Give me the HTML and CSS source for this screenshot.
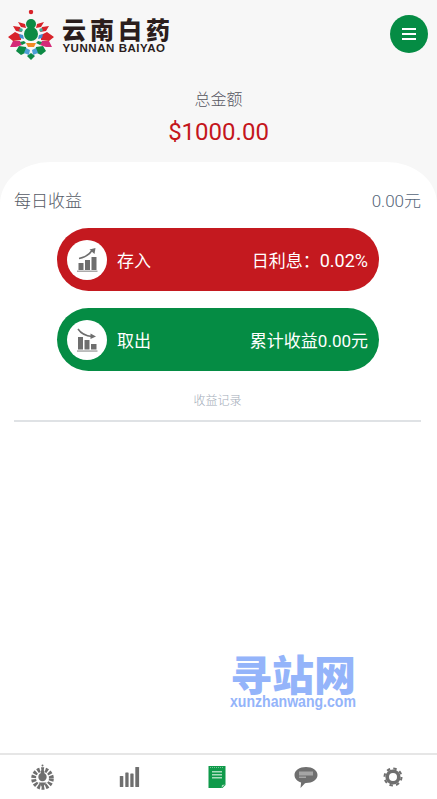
FILE: index.html
```html
<!DOCTYPE html>
<html lang="zh">
<head>
<meta charset="utf-8">
<title>云南白药</title>
<link rel="stylesheet" href="styles.css">
</head>
<body>
<div class="page">
  <header class="top">
    <div class="logo">
      <svg class="flower" viewBox="8 9 46 51" width="46" height="51">
        <circle cx="31" cy="11" r="2.2" fill="#d8232a"/>
        <path d="M18 21l7 2 1 4-5-1z M44 21l-7 2-1 4 5-1z" fill="#d8232a"/>
        <path d="M13 25l7 1 2 5-6-1z M49 25l-7 1-2 5 6-1z" fill="#d8232a"/>
        <path d="M8 36l7-5 6 3 0 5-8 1z M54 36l-7-5-6 3 0 5 8 1z" fill="#d8232a"/>
        <path d="M10 46l3-6 7 0 2 4-6 2z M52 46l-3-6-7 0-2 4 6 2z" fill="#d42a78"/>
        <path d="M16 50l3-5 7 1 1 5-6 3z M46 50l-3-5-7 1-1 5 6 3z" fill="#0d8a45"/>
        <path d="M31 59l-4-4 4-3 4 3z" fill="#0d8a45"/>
        <path d="M24 52l2-5 4 2-1 5z M38 52l-2-5-4 2 1 5z" fill="#4d9fd6"/>
        <path d="M26 42h10l-2 4h-6z" fill="#f08a24"/>
        <path d="M19 33l4 1 1 4-4-1z M43 33l-4 1-1 4 4-1z" fill="#3f8fcf"/>
        <path d="M20 41l4-1 2 2-4 2z M42 41l-4-1-2 2 4 2z" fill="#0d8a45"/>
        <circle cx="21" cy="29" r="1.800" fill="#3bb0a0"/><circle cx="41" cy="29" r="1.800" fill="#3bb0a0"/>
        <circle cx="31" cy="23" r="5" fill="#0d8a45"/>
        <circle cx="31" cy="33" r="7" fill="#0d8a45"/>
        <rect x="28" y="24" width="6" height="6" fill="#0d8a45"/>
      </svg>
      <div class="brand">
        <div class="brand-cn">云南白药</div>
        <div class="brand-en">YUNNAN BAIYAO</div>
      </div>
    </div>
    <button class="menu" aria-label="菜单"><span></span><span></span><span></span></button>
  </header>

  <section class="total">
    <div class="total-label">总金额</div>
    <div class="total-value">$1000.00</div>
  </section>

  <main class="card">
    <div class="daily">
      <span>每日收益</span>
      <span class="daily-value">0.00元</span>
    </div>

    <div class="action action-red">
      <span class="badge">
        <svg viewBox="0 0 40 40" width="40" height="40">
          <rect x="11.500" y="23" width="5" height="7" fill="#6e6e6e"/>
          <rect x="18" y="20" width="5" height="10" fill="#6e6e6e"/>
          <rect x="24.500" y="17" width="5" height="13" fill="#6e6e6e"/>
          <rect x="10" y="30.500" width="20.500" height="1.500" fill="#aaa"/>
          <path d="M12 18.500c6-1 10-3.500 13-8" fill="none" stroke="#6e6e6e" stroke-width="1.500"/>
          <path d="M22.500 9.500l6-1.500-1 6z" fill="#6e6e6e"/>
        </svg>
      </span>
      <span class="action-name">存入</span>
      <span class="action-info">日利息：<span class="rate">0.02%</span></span>
    </div>

    <div class="action action-green">
      <span class="badge">
        <svg viewBox="0 0 40 40" width="40" height="40">
          <rect x="11" y="17" width="5" height="12.500" fill="#6e6e6e"/>
          <rect x="17.500" y="20" width="5" height="9.500" fill="#6e6e6e"/>
          <rect x="24" y="24" width="5.500" height="5.500" fill="#6e6e6e"/>
          <rect x="10" y="30.300" width="20.500" height="1.500" fill="#aaa"/>
          <path d="M11 9c3 4.500 8 7 14 7.500" fill="none" stroke="#6e6e6e" stroke-width="1.500"/>
          <path d="M23.500 13.500l5.500 3-5.500 2.500z" fill="#6e6e6e"/>
        </svg>
      </span>
      <span class="action-name">取出</span>
      <span class="action-info">累计收益0.00元</span>
    </div>

    <div class="record">收益记录</div>
  </main>

  <div class="watermark">
    <div class="wm-cn">寻站网</div>
    <div class="wm-en">xunzhanwang.com</div>
  </div>

  <nav class="tabs">
    <a class="tab">
      <svg viewBox="1.500 0 26 26" width="26" height="26">
        <circle cx="13" cy="1.500" r="1" fill="#6f6f6f"/>
        <circle cx="13" cy="14.500" r="8.800" fill="none" stroke="#6f6f6f" stroke-width="5" stroke-dasharray="2.600 1.400"/>
        <circle cx="13" cy="14" r="6.200" fill="#fff"/>
        <circle cx="13" cy="8" r="2" fill="#6f6f6f"/>
        <circle cx="13" cy="13" r="4.200" fill="#6f6f6f"/>
        <path d="M9 18.500h8l-4 5z" fill="#6f6f6f"/>
      </svg>
    </a>
    <a class="tab">
      <svg viewBox="1.700 0 26 26" width="26" height="26">
        <g fill="#6f6f6f">
          <rect x="3.500" y="12" width="3.500" height="11" rx=".6"/>
          <rect x="9" y="8.500" width="3.300" height="14.500" rx=".6"/>
          <rect x="14" y="9.500" width="3.300" height="13.500" rx=".6"/>
          <rect x="19" y="3" width="3.800" height="20" rx=".6"/>
        </g>
      </svg>
    </a>
    <a class="tab">
      <svg viewBox="1 0 26 26" width="26" height="26">
        <path d="M4.500 2h17v19l-3 3h-14z" fill="#0f9a4a"/>
        <path d="M6 3.500h14" stroke="#8fd0a8" stroke-width=".8" stroke-dasharray="1 1"/>
        <path d="M8 7h10v1.500H8zM8 10h10v1.500H8zM8 13h10v1.500H8z" fill="#a8dcbc"/>
        <path d="M17.500 24l.5-3 3-.5z" fill="#a8dcbc"/>
      </svg>
    </a>
    <a class="tab">
      <svg viewBox="0 0 26 26" width="26" height="26">
        <path d="M13 3c6.500 0 11.500 3.300 11.500 8S19.500 19 13 19l-1 .2L7.500 24l.6-5.500C4 17.300 1.500 14.500 1.500 11 1.500 6.300 6.500 3 13 3z" fill="#6f6f6f"/>
        <rect x="6" y="7.500" width="14" height="4" fill="#a5a5a5"/>
        <rect x="6" y="12.500" width="7" height="1.500" fill="#a5a5a5"/>
      </svg>
    </a>
    <a class="tab">
      <svg viewBox="0 0 26 26" width="26" height="26">
        <circle cx="13" cy="13" r="5.800" fill="none" stroke="#6f6f6f" stroke-width="3.600"/>
        <circle cx="13" cy="13" r="8.500" fill="none" stroke="#6f6f6f" stroke-width="2" stroke-dasharray="3.500 3.180"/>
      </svg>
    </a>
  </nav>
</div>
</body>
</html>
```

FILE: styles.css
```css
* { box-sizing: border-box; }
html, body { margin: 0; padding: 0; height: 100%; }
body {
  font-family: Roboto, "Noto Sans CJK SC", sans-serif;
  font-weight: 300;
  background: #f7f7f7;
  color: #5e6472;
  overflow: hidden;
}
.page {
  position: relative;
  height: 799px;
  display: flex;
  flex-direction: column;
}
.top {
  height: 70px;
  flex: none;
  display: flex;
  align-items: center;
  justify-content: space-between;
  padding: 0 9px 2px 8px;
}
.logo { display: flex; align-items: center; gap: 4px; margin-top: 2px; }
.flower { display: block; }
.brand { width: 112px; text-align: center; margin-top: -1px; }
.brand-cn {
  font-family: "Noto Sans CJK SC", sans-serif;
  font-weight: 900;
  font-size: 24px;
  line-height: 25px;
  letter-spacing: 4px;
  padding-left: 4px;
  color: #2b1d1c;
  white-space: nowrap;
}
.brand-en {
  font-family: "Liberation Sans", sans-serif;
  font-weight: 700;
  font-size: 11.500px;
  line-height: 12px;
  letter-spacing: .55px;
  margin-top: 1px;
  color: #2b1d1c;
  white-space: nowrap;
}
.menu {
  width: 38px;
  height: 38px;
  border: 0;
  border-radius: 50%;
  background: #058c44;
  padding: 0;
  display: flex;
  flex-direction: column;
  align-items: center;
  justify-content: center;
  gap: 3px;
}
.menu span { display: block; width: 14px; height: 2px; background: #fff; }
.total { flex: none; height: 92px; text-align: center; }
.total-label { font-size: 16px; line-height: 20px; padding-top: 20px; box-sizing: content-box; height: 20px; color: #55555f; }
.total-value { font-size: 24px; line-height: 32px; margin-top: 6px; color: #c4161c; font-weight: 400; }
.card {
  flex: 1;
  background: #fff;
  border-radius: 50px 50px 0 0 / 42px 42px 0 0;
  padding: 27px 16px 0 14px;
}
.daily {
  display: flex;
  justify-content: space-between;
  font-size: 17px;
  line-height: 24px;
  height: 24px;
  color: #565b66;
}
.daily-value { color: #56657a; }
.action {
  width: 322px;
  height: 63px;
  margin: 15px auto 0 43px;
  border-radius: 32px;
  display: flex;
  align-items: center;
  padding: 0 11px 0 10px;
  color: #fff;
  font-size: 17px;
  font-weight: 400;
}
.action-red { background: #c4191f; }
.action-green { background: #058c44; margin-top: 17px; }
.badge {
  width: 40px;
  height: 40px;
  border-radius: 50%;
  background: #fff;
  display: flex;
  align-items: center;
  justify-content: center;
  flex: none;
}
.action-name { margin-left: 10px; }
.action-info { margin-left: auto; }
.rate { font-size: 18px; }
.record {
  margin-top: 20px;
  height: 31px;
  font-size: 12px;
  line-height: 20px;
  text-align: center;
  color: #9fabb8;
  border-bottom: 2px solid #dfe2e5;
  width: 407px;
}
.watermark {
  position: absolute;
  left: 229px;
  top: 651px;
  width: 128px;
  text-align: center;
  color: #94b4fa;
}
.wm-cn {
  font-family: "Noto Sans CJK SC", sans-serif;
  font-weight: 900;
  font-size: 42px;
  line-height: 43px;
}
.wm-en {
  font-family: "Liberation Sans", sans-serif;
  font-weight: 700;
  font-size: 16px;
  line-height: 16px;
  white-space: nowrap;
  display: flex;
  justify-content: center;
  transform: scaleX(.88);
}
.tabs {
  position: absolute;
  left: 0;
  right: 0;
  bottom: 0;
  height: 46px;
  background: #fff;
  border-top: 2px solid #e6e6e6;
  display: grid;
  grid-template-columns: repeat(5, 1fr);
}
.tab { display: flex; align-items: center; justify-content: center; }
.tab svg { display: block; }
```
